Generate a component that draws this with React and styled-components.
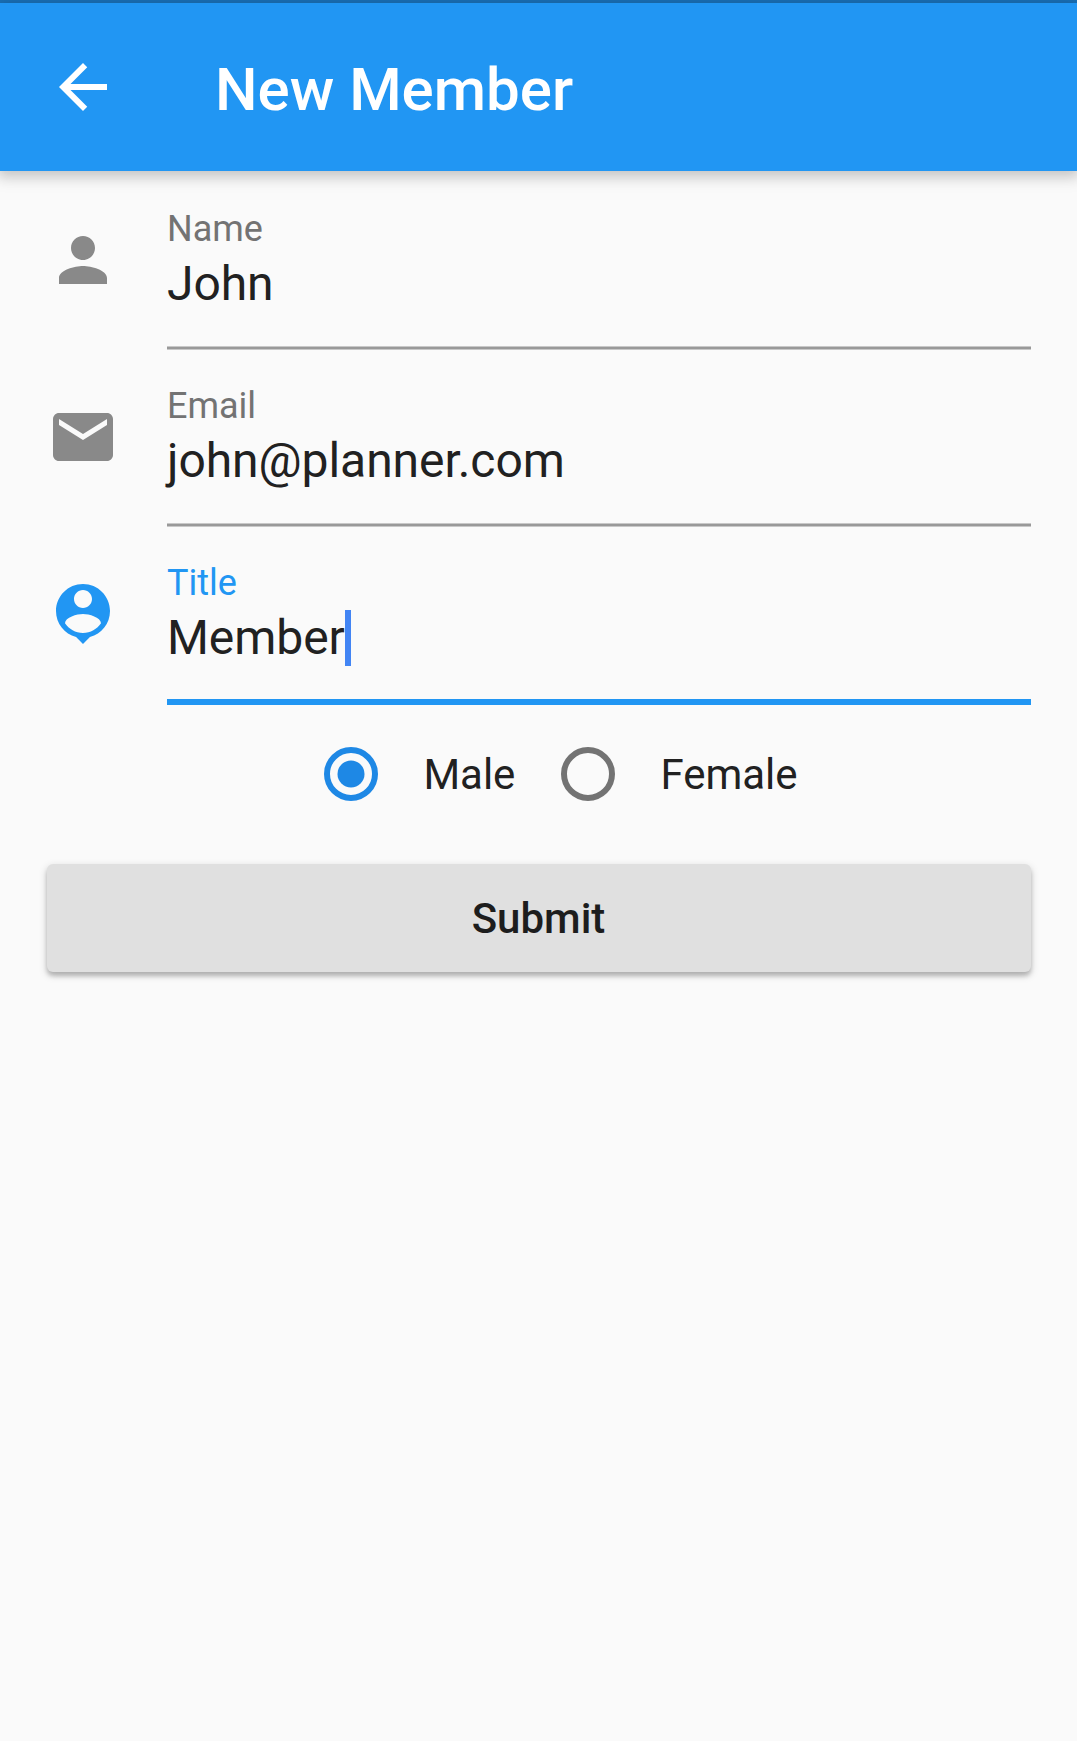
import React, { useState } from "react";
import styled, { createGlobalStyle } from "styled-components";

const GlobalStyle = createGlobalStyle`
  * { box-sizing: border-box; }
  body {
    margin: 0;
    background: #fafafa;
    color: #212121;
    font-family: Roboto, "Liberation Sans", sans-serif;
  }
`;

const Screen = styled.div`
  min-height: 1741px;
  display: flex;
  flex-direction: column;
  overflow: hidden;
`;

const StatusStrip = styled.div`
  height: 3px;
  background: #1a71b8;
`;

const AppBar = styled.header`
  height: 168px;
  padding-left: 47px;
  display: flex;
  align-items: center;
  gap: 96px;
  background: #2196f3;
  color: #fff;
  box-shadow: 0 3px 12px 2px rgba(0, 0, 0, 0.16), 0 6px 16px 3px rgba(0, 0, 0, 0.07);
`;

const BackButton = styled.button`
  display: flex;
  padding: 0;
  border: 0;
  background: none;
  color: inherit;
`;

const Heading = styled.h1`
  margin: 5px 0 0;
  font-size: 60px;
  font-weight: 500;
  line-height: 70px;
`;

const Icon = styled.svg`
  width: 72px;
  height: 72px;
  flex: none;
  display: block;
  fill: currentColor;
`;

const Form = styled.form`
  padding: 3px 46px 0 47px;
  display: flex;
  flex-direction: column;
`;

const FieldRow = styled.div`
  display: flex;
  height: 177px;
  gap: 48px;
  color: ${(p) => (p.$active ? "#2196f3" : "#898989")};

  & > svg {
    margin-top: 50px;
  }
`;

const FieldBody = styled.div`
  flex: 1;
  padding-top: 34px;
  display: flex;
  flex-direction: column;
`;

const Label = styled.label`
  font-size: 36px;
  line-height: 42px;
  color: ${(p) => (p.$active ? "#2196f3" : "#737373")};
`;

const Value = styled.div`
  display: flex;
  height: 56px;
  margin-top: 6px;
  font-size: 48px;
  line-height: 56px;
  letter-spacing: -0.06px;
  color: #212121;
`;

const Caret = styled.span`
  width: 6px;
  height: 56px;
  background: #4285f4;
`;

const Underline = styled.div`
  margin-top: ${(p) => (p.$active ? 33 : 34)}px;
  height: ${(p) => (p.$active ? 6 : 4)}px;
  background: ${(p) => (p.$active ? "#2196f3" : "#999999")};
  border: solid #c8c8c8;
  border-width: ${(p) => (p.$active ? 0 : "1px 0")};
`;

const RadioGroup = styled.div`
  height: 138px;
  padding-right: 1px;
  display: flex;
  align-items: center;
  justify-content: center;
  gap: 1px;
`;

const RadioOption = styled.label`
  display: flex;
  align-items: center;
  font-size: 42px;
  line-height: 49px;
`;

const RadioMark = styled.svg`
  width: 54px;
  height: 54px;
  margin: 0 45px;
  color: ${(p) => (p.$checked ? "#1e88e5" : "#737373")};
`;

const SubmitButton = styled.button`
  height: 108px;
  margin-top: 21px;
  padding: 0 1px 0 0;
  border: 0;
  border-radius: 6px;
  background: #e0e0e0;
  color: #1d1d1d;
  font: 500 42px/49px Roboto, "Liberation Sans", sans-serif;
  box-shadow: 0 4px 4px rgba(0, 0, 0, 0.18), 0 3px 9px rgba(0, 0, 0, 0.18);
`;

const icons = {
  back: "M20 11H7.83l5.59-5.59L12 4l-8 8 8 8 1.41-1.41L7.83 13H20v-2z",
  person:
    "M12 12c2.21 0 4-1.79 4-4s-1.79-4-4-4-4 1.79-4 4 1.79 4 4 4zm0 2c-2.67 0-8 1.34-8 4v2h16v-2c0-2.66-5.33-4-8-4z",
  mail: "M20 4H4c-1.1 0-1.99.9-1.99 2L2 18c0 1.1.9 2 2 2h16c1.1 0 2-.9 2-2V6c0-1.1-.9-2-2-2zm0 4l-8 5-8-5V6l8 5 8-5v2z",
  pin: "M12 2C7.03 2 3 6.03 3 11c0 4.17 2.84 7.67 6.69 8.69L12 22l2.31-2.31C18.16 18.67 21 15.17 21 11c0-4.97-4.03-9-9-9zm0 2c1.66 0 3 1.34 3 3s-1.34 3-3 3-3-1.34-3-3 1.34-3 3-3zm0 14.3c-2.5 0-4.71-1.28-6-3.22.03-1.99 4-3.08 6-3.08 1.99 0 5.97 1.09 6 3.08-1.29 1.94-3.5 3.22-6 3.22z",
};

const fields = [
  { label: "Name", value: "John", icon: "person" },
  { label: "Email", value: "john@planner.com", icon: "mail" },
  { label: "Title", value: "Member", icon: "pin", active: true },
];

function Glyph({ name }) {
  return (
    <Icon viewBox="0 0 24 24" aria-hidden="true">
      <path d={icons[name]} />
    </Icon>
  );
}

function Field({ label, value, icon, active }) {
  return (
    <FieldRow $active={active}>
      <Glyph name={icon} />
      <FieldBody>
        <Label $active={active}>{label}</Label>
        <Value>
          {value}
          {active && <Caret />}
        </Value>
        <Underline $active={active} />
      </FieldBody>
    </FieldRow>
  );
}

function Radio({ label, checked, onSelect }) {
  return (
    <RadioOption onClick={onSelect}>
      <RadioMark viewBox="0 0 54 54" $checked={checked}>
        <circle cx="27" cy="27" r="24" fill="none" stroke="currentColor" strokeWidth="6" />
        {checked && <circle cx="27" cy="27" r="13.5" fill="currentColor" />}
      </RadioMark>
      {label}
    </RadioOption>
  );
}

export default function App() {
  const [gender, setGender] = useState("Male");
  return (
    <>
      <GlobalStyle />
      <Screen>
        <StatusStrip />
        <AppBar>
          <BackButton aria-label="Back">
            <Glyph name="back" />
          </BackButton>
          <Heading>New Member</Heading>
        </AppBar>
        <Form>
          {fields.map((f) => (
            <Field key={f.label} {...f} />
          ))}
          <RadioGroup>
            {["Male", "Female"].map((g) => (
              <Radio key={g} label={g} checked={gender === g} onSelect={() => setGender(g)} />
            ))}
          </RadioGroup>
          <SubmitButton type="button">Submit</SubmitButton>
        </Form>
      </Screen>
    </>
  );
}
